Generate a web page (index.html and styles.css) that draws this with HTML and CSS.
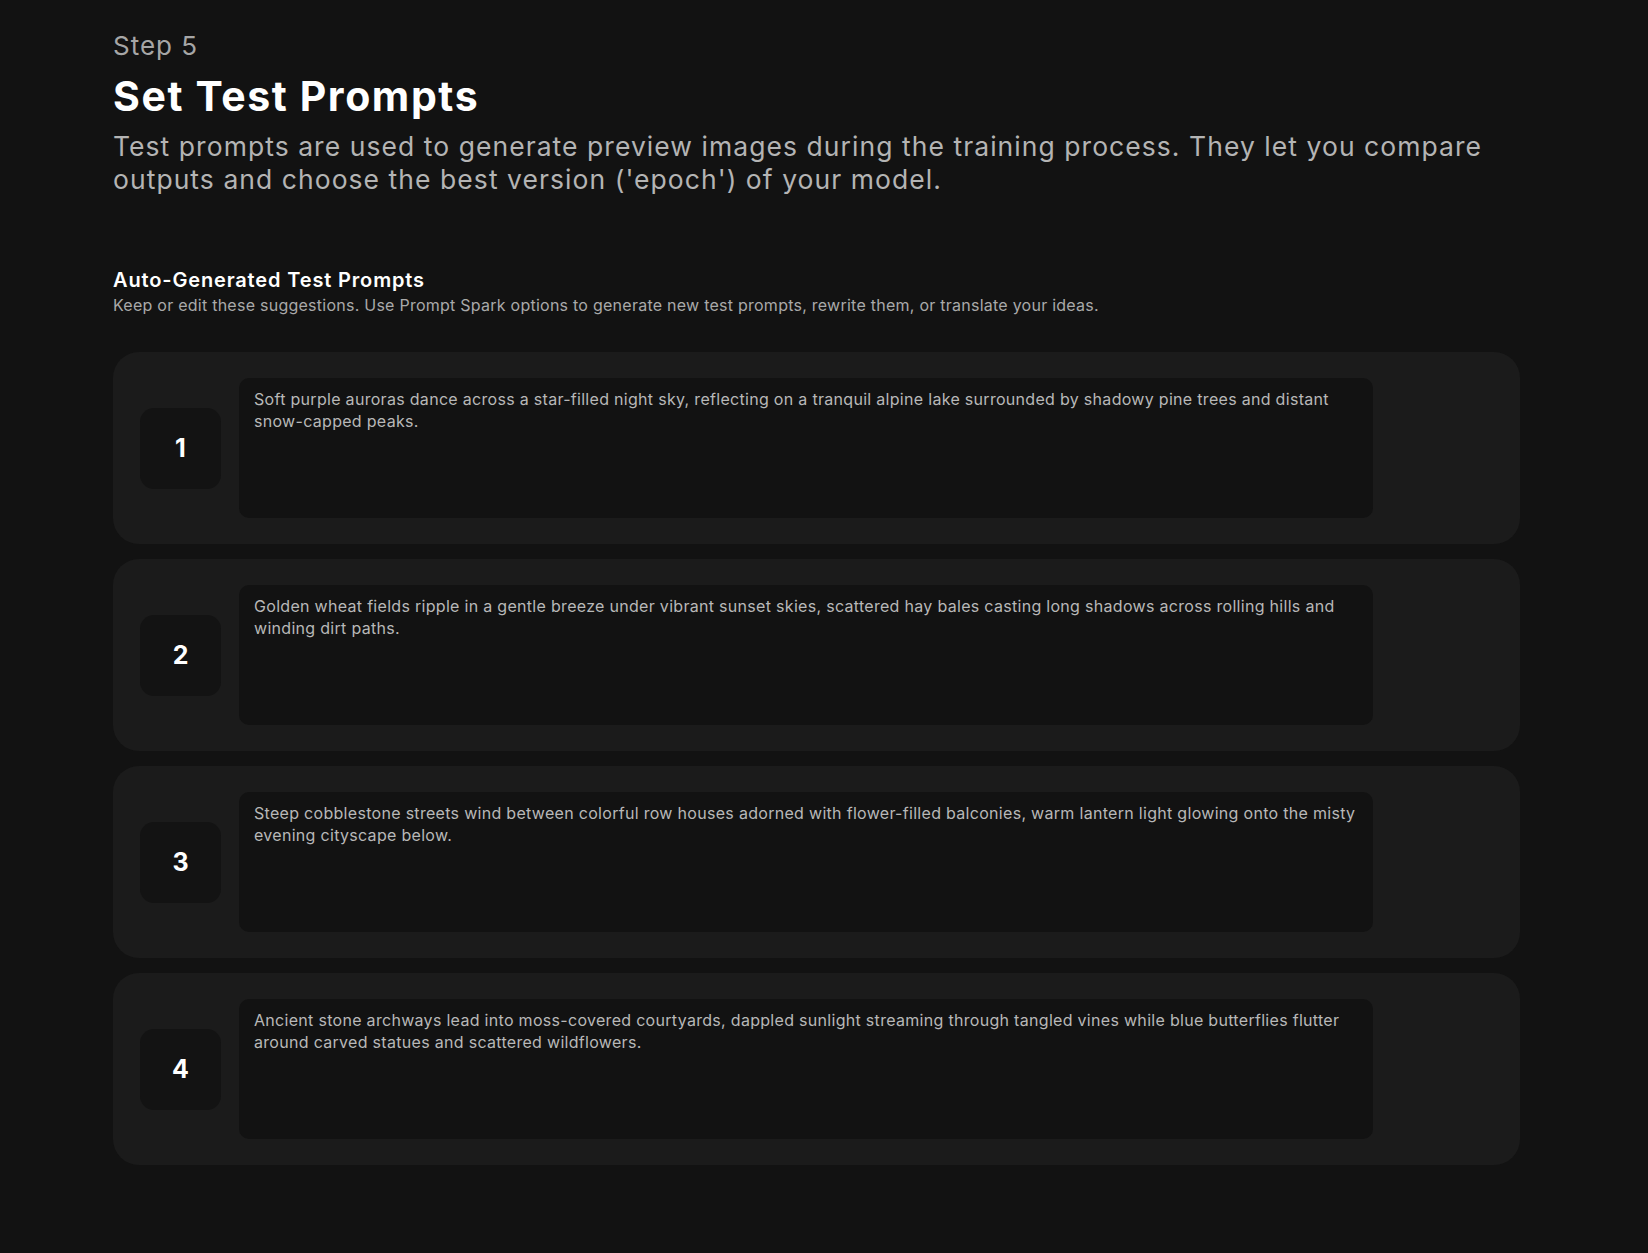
FILE: index.html
```html
<!DOCTYPE html>
<html lang="en">
<head>
<meta charset="utf-8">
<title>Set Test Prompts</title>
<link rel="stylesheet" href="styles.css">
</head>
<body>
<main class="page">
  <header class="step-header">
    <p class="step-label">Step 5</p>
    <h1 class="step-title">Set Test Prompts</h1>
    <p class="step-desc">Test prompts are used to generate preview images during the training process. They let you compare outputs and choose the best version ('epoch') of your model.</p>
  </header>

  <section class="prompts">
    <h2 class="prompts-title">Auto-Generated Test Prompts</h2>
    <p class="prompts-hint">Keep or edit these suggestions. Use Prompt Spark options to generate new test prompts, rewrite them, or translate your ideas.</p>

    <ol class="prompt-list">
      <li class="prompt-card">
        <div class="prompt-num">1</div>
        <div class="prompt-field">Soft purple auroras dance across a star-filled night sky, reflecting on a tranquil alpine lake surrounded by shadowy pine trees and distant snow-capped peaks.</div>
      </li>
      <li class="prompt-card">
        <div class="prompt-num">2</div>
        <div class="prompt-field">Golden wheat fields ripple in a gentle breeze under vibrant sunset skies, scattered hay bales casting long shadows across rolling hills and winding dirt paths.</div>
      </li>
      <li class="prompt-card">
        <div class="prompt-num">3</div>
        <div class="prompt-field">Steep cobblestone streets wind between colorful row houses adorned with flower-filled balconies, warm lantern light glowing onto the misty evening cityscape below.</div>
      </li>
      <li class="prompt-card">
        <div class="prompt-num">4</div>
        <div class="prompt-field">Ancient stone archways lead into moss-covered courtyards, dappled sunlight streaming through tangled vines while blue butterflies flutter around carved statues and scattered wildflowers.</div>
      </li>
    </ol>
  </section>
</main>
</body>
</html>
```

FILE: styles.css
```css
* {
  box-sizing: border-box;
}

html,
body {
  margin: 0;
  padding: 0;
  background: #121212;
}

body {
  font-family: Inter, "Noto Sans", "DejaVu Sans", sans-serif;
  color: #ffffff;
  min-height: 1253px;
}

.page {
  width: 1407px;
  margin-left: 113px;
  padding-top: 30px;
  padding-bottom: 80px;
}

/* header */
.step-header {
  display: flex;
  flex-direction: column;
}

.step-label {
  margin: 0;
  font-size: 26px;
  line-height: 32px;
  font-weight: 400;
  letter-spacing: 1px;
  color: #a6a6a6;
}

.step-title {
  margin: 10px 0 0;
  font-size: 41px;
  line-height: 48px;
  font-weight: 700;
  letter-spacing: 1.6px;
  color: #ffffff;
}

.step-desc {
  margin: 10px 0 0;
  font-size: 26.5px;
  line-height: 32.5px;
  font-weight: 400;
  letter-spacing: 1.05px;
  color: #b4b4b4;
}

/* prompts section */
.prompts {
  margin-top: 73px;
}

.prompts-title {
  margin: 0;
  font-size: 20px;
  line-height: 24px;
  font-weight: 600;
  letter-spacing: 0.85px;
  color: #ffffff;
}

.prompts-hint {
  margin: 2px 0 0;
  font-size: 16px;
  line-height: 22px;
  letter-spacing: 0.25px;
  color: #a9a9a9;
}

.prompt-list {
  list-style: none;
  margin: 36px 0 0;
  padding: 0;
  display: flex;
  flex-direction: column;
  gap: 15px;
}

.prompt-card {
  display: flex;
  align-items: center;
  gap: 18px;
  height: 192px;
  padding: 26px 147px 26px 27px;
  background: #1b1b1b;
  border-radius: 26px;
}

.prompt-num {
  flex: 0 0 81px;
  height: 81px;
  display: flex;
  align-items: center;
  justify-content: center;
  background: #131313;
  border-radius: 14px;
  font-size: 25px;
  font-weight: 700;
  color: #ffffff;
}

.prompt-field {
  flex: 1;
  align-self: stretch;
  padding: 11px 12px 11px 15px;
  background: #121212;
  border-radius: 10px;
  font-size: 16px;
  line-height: 21.7px;
  letter-spacing: 0.3px;
  color: #b8b8b8;
}
```
